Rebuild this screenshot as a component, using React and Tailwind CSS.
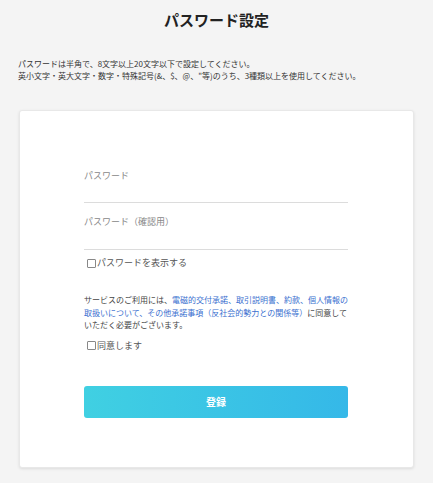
export default function App() {
  const font = { fontFamily: '"Noto Sans CJK JP", "Noto Sans", sans-serif' };

  return (
    <div className="min-h-[483px] w-[433px] bg-[#f4f4f4] pb-[15px]" style={font}>
      {/* Title */}
      <h1 className="pt-[10px] text-center text-[15px] font-bold leading-[20px] text-[#222]">
        パスワード設定
      </h1>

      {/* Description */}
      <div className="mt-[28px] pl-[18px] text-[8px] leading-[12px] text-[#333] whitespace-nowrap">
        <p>パスワードは半角で、8文字以上20文字以下で設定してください。</p>
        <p>英小文字・英大文字・数字・特殊記号(&amp;、$、@、"等)のうち、3種類以上を使用してください。</p>
      </div>

      {/* Card */}
      <div className="mx-[19px] mt-[28px] h-[358px] rounded-[3px] border border-[#e8e8e8] bg-white shadow-[0_1px_3px_rgba(0,0,0,0.1)]">
        <div className="ml-[64px] w-[264px] pt-[58px]">
          <div className="h-[34px] border-b border-[#dcdcdc]">
            <div className="text-[9px] leading-[14px] text-[#888]">パスワード</div>
          </div>

          <div className="mt-[12px] h-[35px] border-b border-[#dcdcdc]">
            <div className="text-[9px] leading-[14px] text-[#888]">パスワード（確認用）</div>
          </div>

          <label className="mt-[6px] flex items-center pl-[3px] text-[9px] leading-[14px] text-[#555]">
            <span className="mr-[1px] inline-block h-[9px] w-[9px] rounded-[1px] border border-[#888] bg-white" />
            パスワードを表示する
          </label>

          <p className="mt-[24px] whitespace-nowrap text-[8px] leading-[12.5px] text-[#444]">
            サービスのご利用には、
            <span className="text-[#3a6fcf]">電磁的交付承諾、取引説明書、約款、個人情報の</span>
            <br />
            <span className="text-[#3a6fcf]">取扱いについて、その他承諾事項（反社会的勢力との関係等）</span>
            に同意して
            <br />
            いただく必要がございます。
          </p>

          <label className="mt-[7px] flex items-center pl-[3px] text-[9px] leading-[14px] text-[#555]">
            <span className="mr-[1px] inline-block h-[9px] w-[9px] rounded-[1px] border border-[#888] bg-white" />
            同意します
          </label>

          <button className="mt-[33px] flex h-[32px] w-[264px] items-center justify-center rounded-[3px] bg-gradient-to-r from-[#40d0e2] to-[#35b8e8] text-[10px] font-bold text-white">
            登録
          </button>
        </div>
      </div>
    </div>
  );
}
